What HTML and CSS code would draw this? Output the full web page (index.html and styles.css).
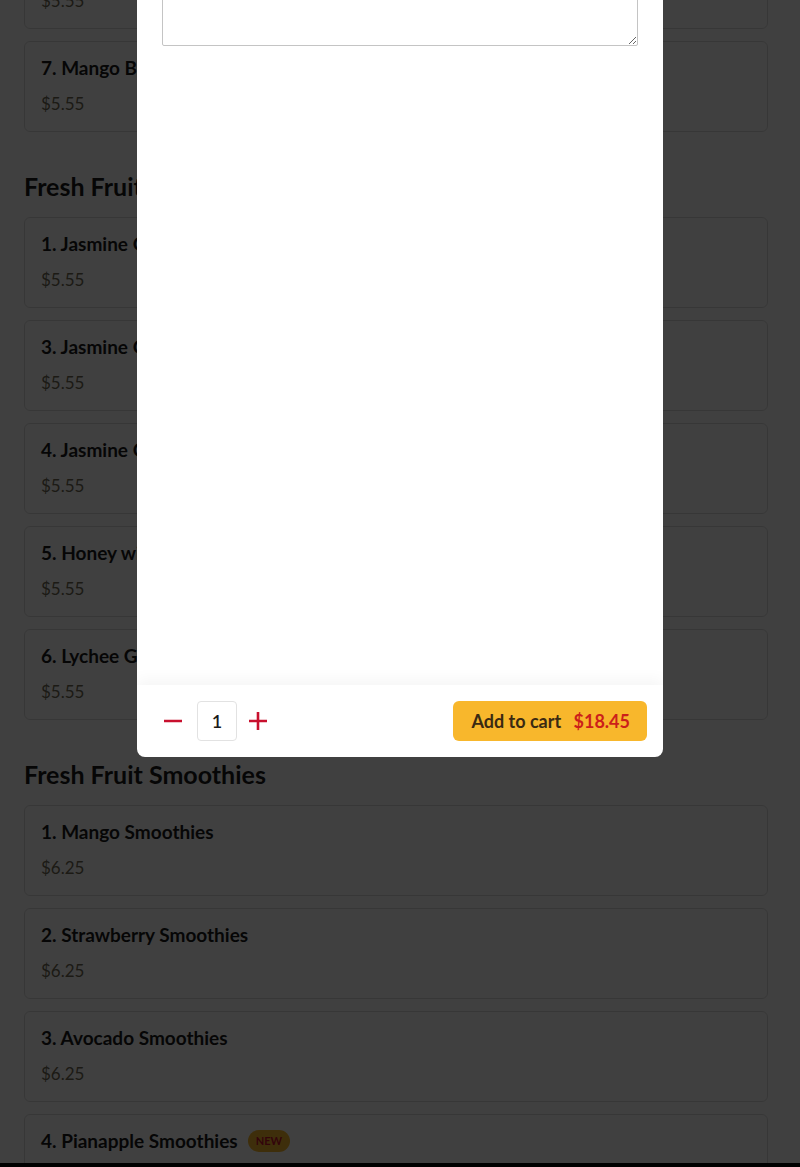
FILE: index.html
```html
<!DOCTYPE html>
<html lang="en">
<head>
    <meta charset="UTF-8">
    <title>Menu</title>
    <link rel="stylesheet" href="styles.css">
</head>
<body>
<div class="page">
    <section class="category">
        <div class="items">
            <div class="item"><div class="item-name">6. Mango Green Tea</div><div class="item-price">$5.55</div></div>
            <div class="item"><div class="item-name">7. Mango Black Tea</div><div class="item-price">$5.55</div></div>
        </div>
    </section>
    <section class="category">
        <h2>Fresh Fruit Tea</h2>
        <div class="items">
            <div class="item"><div class="item-name">1. Jasmine Green Tea</div><div class="item-price">$5.55</div></div>
            <div class="item"><div class="item-name">3. Jasmine Grapefruit Tea</div><div class="item-price">$5.55</div></div>
            <div class="item"><div class="item-name">4. Jasmine Orange Tea</div><div class="item-price">$5.55</div></div>
            <div class="item"><div class="item-name">5. Honey with Lemon Tea</div><div class="item-price">$5.55</div></div>
            <div class="item"><div class="item-name">6. Lychee Green Tea</div><div class="item-price">$5.55</div></div>
        </div>
    </section>
    <section class="category">
        <h2>Fresh Fruit Smoothies</h2>
        <div class="items">
            <div class="item"><div class="item-name">1. Mango Smoothies</div><div class="item-price">$6.25</div></div>
            <div class="item"><div class="item-name">2. Strawberry Smoothies</div><div class="item-price">$6.25</div></div>
            <div class="item"><div class="item-name">3. Avocado Smoothies</div><div class="item-price">$6.25</div></div>
            <div class="item"><div class="item-name">4. Pianapple Smoothies <span class="badge">NEW</span></div><div class="item-price">$6.25</div></div>
            <div class="item"><div class="item-name">5. Kiwi Smoothies</div><div class="item-price">$6.25</div></div>
        </div>
    </section>
</div>

<div class="overlay"></div>

<div class="modal">
    <div class="modal-body">
        <textarea class="note" placeholder=""></textarea>
    </div>
    <div class="modal-footer">
        <div class="qty">
            <button class="qty-btn" type="button" aria-label="minus">
                <svg width="18" height="18" viewBox="0 0 18 18"><path d="M1 9h16" stroke="#c8102e" stroke-width="2.6" stroke-linecap="square"/></svg>
            </button>
            <div class="qty-value">1</div>
            <button class="qty-btn" type="button" aria-label="plus">
                <svg width="18" height="18" viewBox="0 0 18 18"><path d="M1 9h16M9 1v16" stroke="#c8102e" stroke-width="2.6" stroke-linecap="square"/></svg>
            </button>
        </div>
        <button class="add-btn" type="button">Add to cart <span class="add-price">$18.45</span></button>
    </div>
</div>

<div class="bottom-bar"></div>
</body>
</html>
```

FILE: styles.css
```css
* {
    margin: 0;
    padding: 0;
    box-sizing: border-box;
}

body {
    font-family: "Lato", "Noto Sans", sans-serif;
    color: #1a1a1a;
    background-color: #fff;
    overflow: hidden;
}

.page {
    margin-top: -62px;
    padding: 0 32px 0 24px;
}

.category h2 {
    font-size: 25px;
    font-weight: 700;
    line-height: 32px;
    margin: 38px 0 15px;
}

.items {
    display: flex;
    flex-direction: column;
    gap: 12px;
}

.item {
    border: 1px solid #dcdcdc;
    border-radius: 6px;
    padding: 14px 16px 15px;
}

.item-name {
    font-size: 19px;
    font-weight: 700;
    line-height: 24px;
    display: flex;
    align-items: center;
}

.item-price {
    font-size: 17px;
    line-height: 24px;
    margin-top: 12px;
    color: #6f6a55;
}

.badge {
    display: inline-block;
    margin-left: 10px;
    padding: 0 8px;
    height: 22px;
    line-height: 22px;
    border-radius: 11px;
    background-color: #f8b72c;
    color: #c8102e;
    font-size: 11px;
    font-weight: 700;
}

.overlay {
    position: fixed;
    top: 0;
    left: 0;
    right: 0;
    bottom: 0;
    background-color: rgba(0, 0, 0, 0.75);
}

.modal {
    position: fixed;
    top: 0;
    left: 137px;
    width: 526px;
    height: 757px;
    background-color: #fff;
    border-radius: 0 0 8px 8px;
    display: flex;
    flex-direction: column;
    overflow: hidden;
}

.modal-body {
    flex: 1;
    padding: 0 25px;
    overflow: hidden;
}

.note {
    display: block;
    width: 100%;
    height: 106px;
    margin-top: -60px;
    border: 1px solid #c4c4c4;
    border-radius: 2px;
    resize: vertical;
    font-family: inherit;
}

.modal-footer {
    height: 72px;
    padding: 0 16px;
    display: flex;
    align-items: center;
    justify-content: space-between;
    box-shadow: 0 -6px 14px rgba(0, 0, 0, 0.04);
    position: relative;
}

.qty {
    display: flex;
    align-items: center;
}

.qty-btn {
    width: 40px;
    height: 40px;
    border: 0;
    background: none;
    display: flex;
    align-items: center;
    justify-content: center;
    cursor: pointer;
}

.qty-value {
    width: 40px;
    height: 40px;
    margin: 0 1px 0 4px;
    border: 1px solid #e2e2e2;
    border-radius: 4px;
    text-align: center;
    line-height: 38px;
    font-size: 18px;
    font-weight: 600;
}

.add-btn {
    height: 40px;
    padding: 0 17px 0 18px;
    border: 0;
    border-radius: 6px;
    background-color: #f8b72c;
    color: #3b2a12;
    font-family: inherit;
    font-size: 18px;
    font-weight: 700;
    cursor: pointer;
}

.add-price {
    margin-left: 8px;
    color: #cc1f1a;
}

.bottom-bar {
    position: fixed;
    left: 0;
    right: 0;
    bottom: 0;
    height: 4px;
    background-color: #000;
}
```
